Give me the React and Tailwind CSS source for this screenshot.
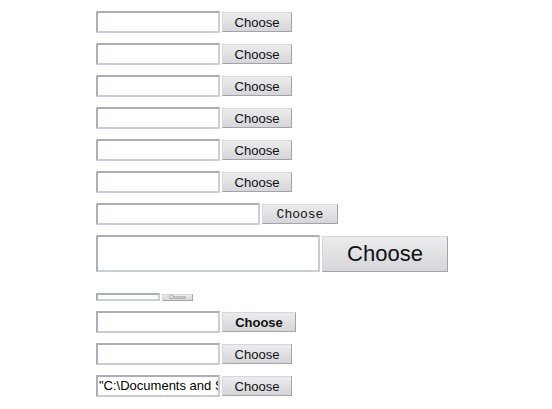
import React from 'react';

const inputCls =
  'box-border border-2 border-t-[#a9b0bd] border-l-[#a9b0bd] border-b-[#c9cdd5] border-r-[#c9cdd5] bg-white outline-none';
const btnCls =
  'box-border border border-t-[#d8d8dc] border-l-[#d8d8dc] border-b-[#a4a4a8] border-r-[#a4a4a8] bg-gradient-to-b from-[#ececef] to-[#d6d6da] text-[#111] leading-none flex items-center justify-center';

const Row = ({ inputW, inputH, btnW, btnH, btnText = 'Choose', btnFont, value }) => (
  <div className="flex items-center gap-[2px]">
    <div className={`${inputCls} ${inputW} ${inputH} overflow-hidden whitespace-nowrap text-[13px] font-['Liberation_Sans',Arial,sans-serif] flex items-center px-[1px]`}>
      {value}
    </div>
    <div className={`${btnCls} ${btnW} ${btnH} ${btnFont}`}>{btnText}</div>
  </div>
);

const normal = "text-[13px] font-['Liberation_Sans',Arial,sans-serif]";

export default function App() {
  return (
    <div className="w-[552px] h-[409px] bg-white pl-[96px] pt-[11px] flex flex-col gap-[10px]">
      {[0, 1, 2, 3, 4, 5].map((i) => (
        <Row key={i} inputW="w-[124px]" inputH="h-[22px]" btnW="w-[70px]" btnH="h-[20px]" btnFont={normal} />
      ))}
      <Row
        inputW="w-[164px]"
        inputH="h-[22px]"
        btnW="w-[76px]"
        btnH="h-[20px]"
        btnFont="text-[13px] font-['Liberation_Mono','Courier_New',monospace]"
      />
      <Row
        inputW="w-[224px]"
        inputH="h-[37px]"
        btnW="w-[126px]"
        btnH="h-[36px]"
        btnFont="text-[22px] font-['Liberation_Sans',Arial,sans-serif]"
      />
      <div className="mt-[11px]">
        <Row
          inputW="w-[64px]"
          inputH="h-[8px]"
          btnW="w-[31px]"
          btnH="h-[7px]"
          btnFont="text-[5px] text-[#888] font-['Liberation_Sans',Arial,sans-serif]"
        />
      </div>
      <Row
        inputW="w-[124px]"
        inputH="h-[22px]"
        btnW="w-[74px]"
        btnH="h-[20px]"
        btnFont="text-[13px] font-bold font-['Liberation_Sans',Arial,sans-serif]"
      />
      <Row inputW="w-[124px]" inputH="h-[22px]" btnW="w-[70px]" btnH="h-[20px]" btnFont={normal} />
      <Row
        inputW="w-[124px]"
        inputH="h-[22px]"
        btnW="w-[70px]"
        btnH="h-[20px]"
        btnFont={normal}
        value={'"C:\\Documents and Settings'}
      />
    </div>
  );
}
